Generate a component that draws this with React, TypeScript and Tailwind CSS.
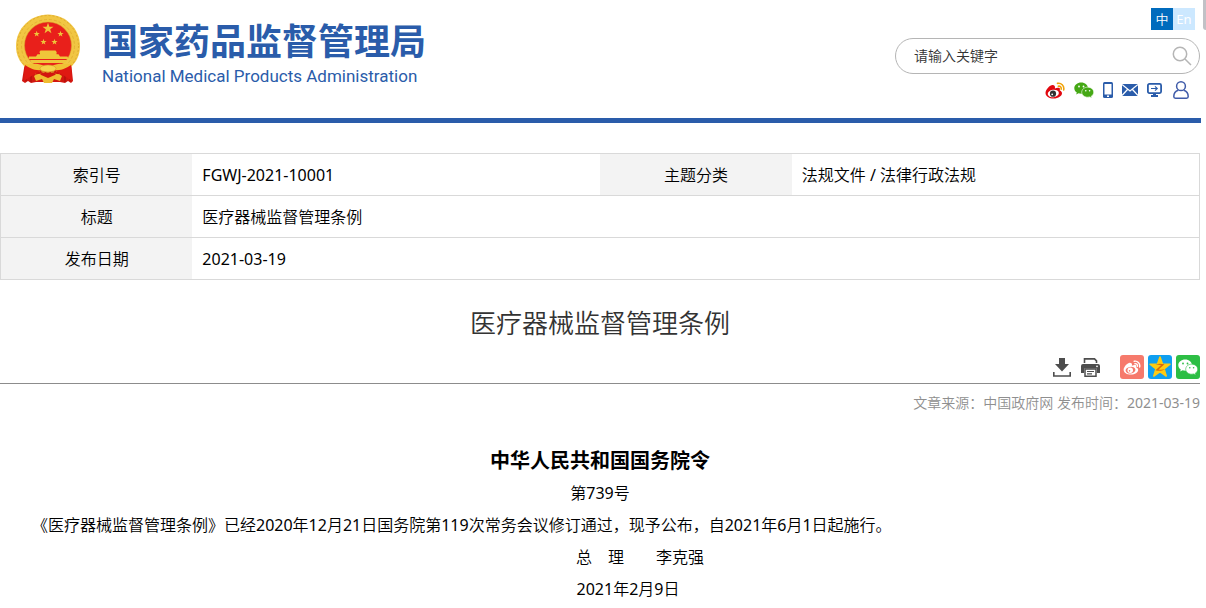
import React from "react";

const STAR = "M0-10 2.4-3.2 9.5-3.1 3.8 1.2 5.9 8.1 0 4 -5.9 8.1 -3.8 1.2 -9.5-3.1 -2.4-3.2Z";

function Emblem() {
  return (
    <svg viewBox="0 0 64 70" className="h-[70px] w-16 shrink-0" aria-hidden="true">
      <path d="M9 48 6 67l3 2 3-2 3 2 5-1 24 0 5 1 3-2 3 2 2-2-2-19Z" fill="#d2160f" />
      <path d="M11 54 10 67M15 57v11M53 54l1 13M49 57v11" stroke="#a30f0c" strokeWidth="1" />
      <path d="M32 .5C14.500 .5 0 14.500 0 32c0 9 3.500 16 9.500 21.500L20 56h24l10.500-2.500C60.500 48 64 41 64 32 64 14.500 49.500 .5 32 .5Z" fill="#f1c643" />
      <circle cx="32" cy="32" r="30.500" fill="none" stroke="#dfa92c" strokeWidth="1" strokeDasharray="2 2" />
      <circle cx="32" cy="32" r="26.500" fill="none" stroke="#e5b233" strokeWidth="1" strokeDasharray="3 2" />
      <circle cx="32" cy="31.500" r="23.500" fill="#e9201b" stroke="#d9a02a" strokeWidth=".5" />
      <g fill="#efc53a">
        <path d={STAR} transform="translate(32 14.500) scale(.58)" />
        <path d={STAR} transform="translate(20.700 20) scale(.32)" />
        <path d={STAR} transform="translate(44.500 20) scale(.32)" />
        <path d={STAR} transform="translate(27.500 28) scale(.32)" />
        <path d={STAR} transform="translate(38.500 28) scale(.32)" />
        <path d="M24.500 36.500h15l1.500 2h-18ZM24 38.500h16.500v1.700H24ZM21.500 40.200h21l1.500 2.300H20ZM13 42.500l-.5 2.500h40l-1-2.500ZM14 46h37l-1.500 3h-34Z" />
      </g>
      <path d="M8 50c6 0 13-1 18 1l6 3 6-3c5-2 12-1 18-1l-8 7c-4 1-9-1-16-1s-12 2-16 1Z" fill="#f0c134" />
      <path d="M9 51c5 3 9 6 17 5l-9 5-9 6ZM55 51c-5 3-9 6-17 5l9 5 9 6Z" fill="#df1912" />
      <ellipse cx="32" cy="54.500" rx="8" ry="3.500" fill="#f6d34c" stroke="#d59c25" strokeWidth=".6" />
      <path d="M18 62c4-3 9-3 14 0 5-3 10-3 14 0l-2 5-6-2-2 4h-8l-2-4-6 2Z" fill="#efbd31" />
      <path d="M24 60.500c4-2.500 12-2.500 16 0l-8 3.500Z" fill="#d2160f" />
    </svg>
  );
}

function WeiboIcon({ body, eye, pupil, wave, className }: { body: string; eye: string; pupil: string; wave: string; className: string }) {
  return (
    <svg viewBox="0 0 20 17" className={className} aria-hidden="true">
      <path d="M7.500 3C5 3 .5 7.500 .5 11c0 3.500 4 5.500 8 5.500 5 0 8.500-2.800 8.500-5.300 0-1.700-1.200-2.500-2.300-2.800.5-1.500.2-2.300-.8-2.600-1-.4-2.500 0-4 .6C10.300 4.500 9.700 3 7.500 3Z" fill={body} />
      <ellipse cx="8.300" cy="11.500" rx="5.600" ry="3.700" fill={eye} transform="rotate(-8 8.300 11.500)" />
      <circle cx="8" cy="11.700" r="3.100" fill={pupil} />
      <circle cx="7.200" cy="12.300" r=".9" fill={eye} />
      <path d="M12.500 1.400c3.600-.8 7 2.200 6.200 6.500M13.300 4.200c1.800-.3 3.200.9 2.900 2.900" fill="none" stroke={wave} strokeWidth="1.600" strokeLinecap="round" />
    </svg>
  );
}

function WechatIcon({ color, eye, className }: { color: string; eye: string; className: string }) {
  return (
    <svg viewBox="0 0 20 16" className={className} aria-hidden="true">
      <path d="M7.200 .5C3.300 .5 .3 3 .3 6.200c0 1.800 1 3.300 2.500 4.300l-.6 2 2.300-1.200c.9.300 1.800.4 2.900.4C11.200 11.700 14 9.300 14 6.200 14 3 11 .5 7.200 .5Z" fill={color} />
      <path d="M13.700 5.200c-3.400 0-6 2.200-6 5s2.600 5 6 5c.8 0 1.500-.1 2.200-.3l2 1-.5-1.800c1.400-.9 2.300-2.300 2.300-3.900 0-2.800-2.600-5-6-5Z" fill={color} stroke={eye} strokeWidth=".6" />
      <g fill={eye}>
        <circle cx="5" cy="4.500" r=".9" />
        <circle cx="9.500" cy="4.500" r=".9" />
        <circle cx="11.800" cy="8.700" r=".8" />
        <circle cx="15.600" cy="8.700" r=".8" />
      </g>
    </svg>
  );
}

function PhoneIcon() {
  return (
    <svg viewBox="0 0 10 16" className="h-4 w-[10px]" aria-hidden="true">
      <rect width="10" height="16" rx="1.500" fill="#2a5caa" />
      <rect x="1.500" y="2" width="7" height="10.500" fill="#fff" />
      <rect x="4" y="13.500" width="2" height="1.500" fill="#fff" />
    </svg>
  );
}

function MailIcon() {
  return (
    <svg viewBox="0 0 16 12" className="h-3 w-4" aria-hidden="true">
      <rect width="16" height="12" fill="#2a5caa" />
      <path d="m0 .5 8 6.500 8-6.500M0 11.500 5.500 5.500M16 11.500l-5.500-6" fill="none" stroke="#fff" strokeWidth="1.200" />
    </svg>
  );
}

function MonitorIcon() {
  return (
    <svg viewBox="0 0 15 14" className="h-[14px] w-[15px]" aria-hidden="true">
      <rect x=".9" y=".9" width="13.200" height="9.200" rx="1.500" fill="none" stroke="#2a5caa" strokeWidth="1.800" />
      <path d="M6 10h3v2h2v2H4v-2h2Z" fill="#2a5caa" />
      <path d="M4 5.500h6M8 3.300l2.300 2.200L8 7.700" fill="none" stroke="#2a5caa" strokeWidth="1.100" />
    </svg>
  );
}

function UserIcon() {
  return (
    <svg viewBox="0 0 16 18" className="h-[18px] w-4" aria-hidden="true">
      <g fill="none" stroke="#3f5ba9" strokeWidth="1.500">
        <circle cx="8" cy="5.200" r="4.400" />
        <path d="M5.300 9.300C2.500 10.200 .8 12.500 .8 15.500c0 1 .6 1.700 1.600 1.700h11.200c1 0 1.600-.7 1.600-1.700 0-3-1.700-5.300-4.500-6.200" />
      </g>
    </svg>
  );
}

function DownloadIcon() {
  return (
    <svg viewBox="0 0 18 19" className="h-[19px] w-[18px]" aria-hidden="true">
      <path d="M6 0h6v6h4L9 13.500 2 6h4Z" fill="#4d4d4d" />
      <path d="M.8 14v4h16.400v-4" fill="none" stroke="#4d4d4d" strokeWidth="1.600" />
    </svg>
  );
}

function PrintIcon() {
  return (
    <svg viewBox="0 0 19 19" className="h-[19px] w-[19px]" aria-hidden="true">
      <path d="M3.500 5V.9h10l2 2V5" fill="none" stroke="#4d4d4d" strokeWidth="1.600" />
      <path d="M2 6h15a2 2 0 0 1 2 2v7h-3v-4.500H3V15H0V8a2 2 0 0 1 2-2Z" fill="#4d4d4d" />
      <circle cx="16" cy="8.300" r=".9" fill="#fff" />
      <path d="M4 11h11v7.200H4Z" fill="#fff" stroke="#4d4d4d" strokeWidth="1.500" />
      <path d="M6 13.500h7M6 15.800h5" stroke="#4d4d4d" strokeWidth="1.200" />
    </svg>
  );
}

function QzoneIcon() {
  return (
    <svg viewBox="0 0 24 24" className="size-6" aria-hidden="true">
      <path d={STAR} transform="translate(12 12.500) scale(1.050)" fill="#fecb14" stroke="#fecb14" strokeLinejoin="round" strokeWidth="1.500" />
      <path d="M7.500 9.300c3-.8 6-.8 9 0L10.500 14.500c2 .4 4.500.3 6.500-.2-3 1.700-6.500 2-9.500 1l5.500-5c-2-.5-3.500-.6-5.500-1Z" fill="#d8690c" />
    </svg>
  );
}

const label = "w-[16%] bg-[#f3f3f3] text-center font-normal";
const value = "px-[10px]";

export default function App() {
  return (
    <div className="relative overflow-x-hidden bg-white pr-[6px] font-['Noto_Sans','Noto_Sans_CJK_SC_DemiLight','Noto_Sans_CJK_SC',sans-serif] text-base text-black">
      <div className="absolute top-0 right-0 h-[30px] w-[3px] rounded-bl-sm bg-[#c1c1c6]" />
      <header className="-mr-px flex h-[123px] items-start justify-between border-b-[5px] border-[#2a5caa] pr-px pl-4">
        <a href="#home" className="flex gap-[22px] pt-[14px] text-[#2a5caa]">
          <Emblem />
          <span className="flex flex-col pt-[6px]">
            <span className="font-['Noto_Sans','Noto_Sans_CJK_SC',sans-serif] text-[36px] leading-[44px] font-bold whitespace-nowrap">国家药品监督管理局</span>
            <span className="font-[Roboto,sans-serif] text-[17px] leading-6 whitespace-nowrap">National Medical Products Administration</span>
          </span>
        </a>
        <div className="flex flex-col items-end pt-2">
          <nav className="mr-[5px] flex text-[13px] leading-[22px] text-white">
            <a href="#zh" className="w-[22px] bg-[#006bbd] text-center">中</a>
            <a href="#en" className="w-[22px] bg-[#cce8ff] text-center">En</a>
          </nav>
          <form className="mt-2 flex h-9 w-[305px] items-center rounded-full border border-[#b5b5b5] pr-[7px] pl-[18px]">
            <input
              type="text"
              aria-label="搜索"
              placeholder="请输入关键字"
              className="min-w-0 flex-1 bg-transparent text-sm outline-none placeholder:text-[#333]"
            />
            <button type="button" aria-label="搜索">
              <svg viewBox="0 0 20 20" className="size-5" fill="none" stroke="#b5b5b5" strokeWidth="1.500" aria-hidden="true">
                <circle cx="8" cy="8" r="6.700" />
                <path d="m13 13 6 6" />
              </svg>
            </button>
          </form>
          <div className="mt-[7px] mr-[11px] flex items-center gap-[9px]">
            <a href="#weibo" aria-label="微博">
              <WeiboIcon body="#e1070f" eye="#fff" pupil="#333" wave="#f0a30a" className="h-[17px] w-5" />
            </a>
            <a href="#wechat" aria-label="微信">
              <WechatIcon color="#45a815" eye="#fff" className="h-4 w-5" />
            </a>
            <a href="#mobile" aria-label="手机版"><PhoneIcon /></a>
            <a href="#mail" aria-label="邮箱"><MailIcon /></a>
            <a href="#screen" aria-label="电脑版"><MonitorIcon /></a>
            <a href="#user" aria-label="个人中心" className="ml-[2px]"><UserIcon /></a>
          </div>
        </div>
      </header>

      <main>
        <table className="mt-[30px] w-full table-fixed border-collapse border border-[#d9d9d9]">
          <tbody>
            <tr className="h-[42px] border-b border-[#d9d9d9]">
              <th scope="row" className={label}>索引号</th>
              <td className={value}>FGWJ-2021-10001</td>
              <th scope="row" className={label}>主题分类</th>
              <td className={value}>法规文件 / 法律行政法规</td>
            </tr>
            <tr className="h-[42px] border-b border-[#d9d9d9]">
              <th scope="row" className={label}>标题</th>
              <td className={value} colSpan={3}>医疗器械监督管理条例</td>
            </tr>
            <tr className="h-[42px]">
              <th scope="row" className={label}>发布日期</th>
              <td className={value} colSpan={3}>2021-03-19</td>
            </tr>
          </tbody>
        </table>

        <h1 className="mt-[23px] text-center text-[26px] leading-10 font-normal text-[#333]">医疗器械监督管理条例</h1>

        <div className="mt-3 flex h-[29px] items-start justify-end gap-1 border-b border-[#8c8c8c]">
          <div className="mr-4 flex h-6 items-center gap-[10px]">
            <button type="button" aria-label="下载"><DownloadIcon /></button>
            <button type="button" aria-label="打印"><PrintIcon /></button>
          </div>
          <button type="button" aria-label="分享到微博" className="flex size-6 items-center justify-center rounded-[3px] bg-[#f67a6c]">
            <WeiboIcon body="#fff" eye="#f67a6c" pupil="#fff" wave="#fff" className="h-[15px] w-[18px]" />
          </button>
          <button type="button" aria-label="分享到QQ空间" className="flex size-6 items-center justify-center rounded-[3px] bg-[#109ff0]">
            <QzoneIcon />
          </button>
          <button type="button" aria-label="分享到微信" className="flex size-6 items-center justify-center rounded-[3px] bg-[#2dbe45]">
            <WechatIcon color="#fff" eye="#2dbe45" className="h-4 w-5" />
          </button>
        </div>
        <p className="mt-[7px] text-right text-sm leading-6 text-[#8f8f8f]">文章来源：中国政府网 发布时间：2021-03-19</p>

        <article className="pt-[30px] leading-8">
          <h2 className="text-center font-['Noto_Sans','Noto_Sans_CJK_SC',sans-serif] text-xl leading-8 font-bold">中华人民共和国国务院令</h2>
          <p className="text-center">第739号</p>
          <p className="indent-[2em]">《医疗器械监督管理条例》已经2020年12月21日国务院第119次常务会议修订通过，现予公布，自2021年6月1日起施行。</p>
          <p className="pl-20 text-center">总　理　　李克强</p>
          <p className="pl-14 text-center">2021年2月9日</p>
        </article>
      </main>
    </div>
  );
}
